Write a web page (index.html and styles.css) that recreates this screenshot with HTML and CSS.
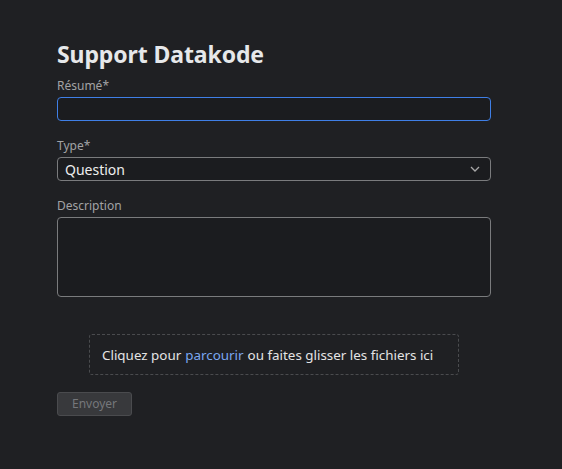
FILE: index.html
```html
<!DOCTYPE html>
<html lang="fr">
<head>
<meta charset="utf-8">
<title>Support Datakode</title>
<link rel="stylesheet" href="styles.css">
</head>
<body>
<main class="page">
  <h1 class="title">Support Datakode</h1>
  <form class="form">
    <div class="field">
      <label class="label">Résumé*</label>
      <div class="input focused"></div>
    </div>
    <div class="field">
      <label class="label">Type*</label>
      <div class="input select">
        <span>Question</span>
        <svg class="chev" width="10" height="6" viewBox="0 0 10 6"><path d="M1 1l4 4 4-4" fill="none" stroke="#a8a8a8" stroke-width="1.3"/></svg>
      </div>
    </div>
    <div class="field">
      <label class="label">Description</label>
      <div class="input textarea"></div>
    </div>
    <div class="dropwrap">
      <div class="dropzone">Cliquez pour <span class="link">parcourir</span> ou faites glisser les fichiers ici</div>
    </div>
    <div class="actions">
      <button type="button" class="btn" disabled>Envoyer</button>
    </div>
  </form>
</main>
</body>
</html>
```
FILE: styles.css
```css
html, body {
  margin: 0;
  background: #1f2023;
  height: 100%;
}
body {
  font-family: "Noto Sans", "Open Sans", sans-serif;
  color: #e4e4e4;
}
.page {
  width: 434px;
  padding: 38px 0 0 57px;
}
.title {
  margin: 0;
  font-size: 23px;
  font-weight: 700;
  line-height: 32px;
  color: #e6e8ea;
  letter-spacing: -0.1px;
}
.form {
  display: flex;
  flex-direction: column;
}
.field {
  display: flex;
  flex-direction: column;
  margin-top: 8px;
}
.field + .field {
  margin-top: 17px;
}
.label {
  font-size: 12px;
  line-height: 16px;
  color: #a2a3a5;
  margin-bottom: 3px;
}
.input {
  box-sizing: border-box;
  height: 24px;
  border: 1px solid #7a7b7d;
  border-radius: 4px;
  background: #1b1c1f;
}
.input.focused {
  border-color: #3f7fe6;
}
.select {
  display: flex;
  align-items: center;
  justify-content: space-between;
  padding: 0 10px 0 7px;
  font-size: 14px;
  color: #eeeeee;
}
.textarea {
  height: 80px;
}
.dropwrap {
  display: flex;
  justify-content: flex-start;
  padding-left: 32px;
  margin-top: 37px;
}
.dropzone {
  box-sizing: border-box;
  width: 370px;
  height: 41px;
  border: 1px dashed #4a4b4e;
  border-radius: 3px;
  display: flex;
  align-items: center;
  padding-left: 12px;
  font-size: 13.4px;
  color: #e4e4e4;
}
.link {
  color: #7aa7f0;
  margin: 0 4px;
}
.actions {
  margin-top: 16px;
}
.btn {
  box-sizing: border-box;
  width: 75px;
  height: 24px;
  border: 1px solid #4a4b4e;
  border-radius: 3px;
  background: #38393c;
  color: #75777b;
  font-family: inherit;
  font-size: 12px;
  padding: 0;
}
```
